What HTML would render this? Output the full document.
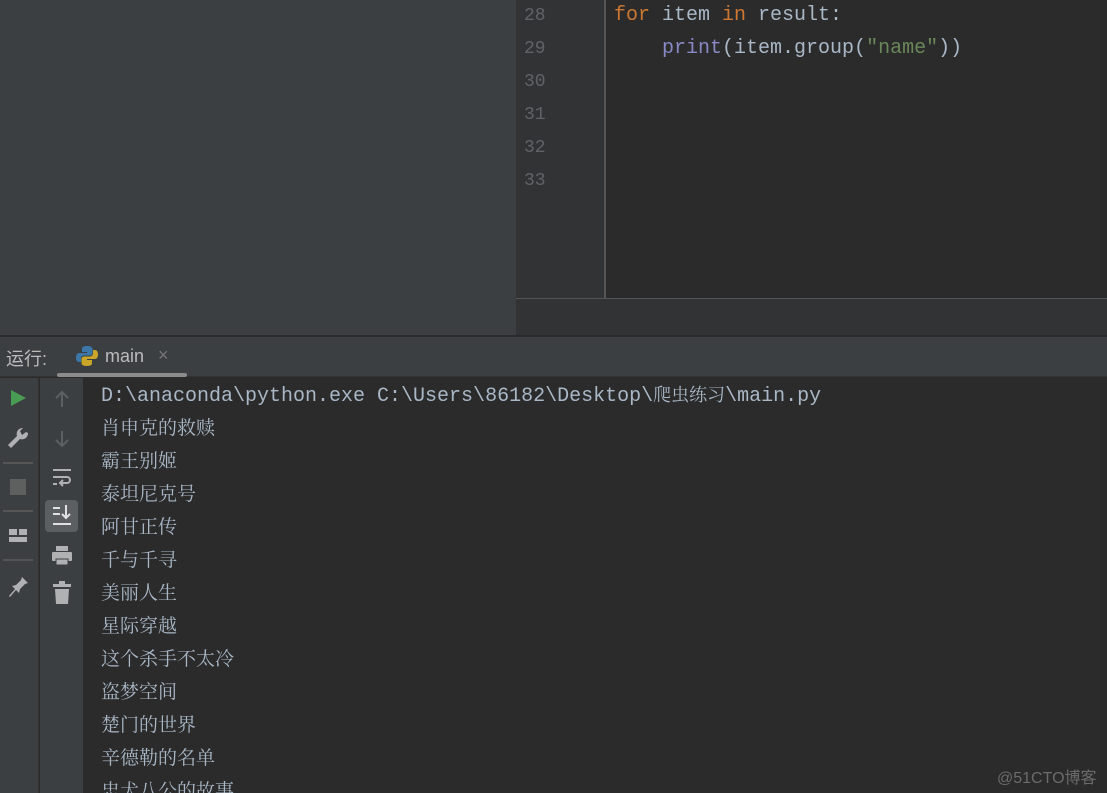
<!DOCTYPE html>
<html><head><meta charset="utf-8"><style>
*{margin:0;padding:0;box-sizing:border-box}
html,body{width:1107px;height:793px;overflow:hidden}
body{background:#2b2b2b;position:relative;font-family:"Liberation Sans","Noto Sans CJK SC",sans-serif}
.a{position:absolute}
.mono{font-family:"Liberation Mono","DejaVu Sans Mono","Noto Sans CJK SC",monospace}
.ln{position:absolute;left:524px;color:#606366;font-size:18px}
.cl{position:absolute;left:101px;color:#a9b7c6;font-size:19px;font-family:"Noto Serif CJK SC","Noto Sans CJK SC",serif;white-space:nowrap}
</style></head><body>
<div class="a" style="left:0;top:0;width:516px;height:336px;background:#3c3f41"></div>
<div class="a" style="left:516px;top:0;width:89px;height:299px;background:#313335"></div>
<div class="a" style="left:604px;top:0;width:2px;height:299px;background:#555"></div>
<div class="a" style="left:606px;top:0;width:501px;height:299px;background:#2b2b2b"></div>
<div class="a" style="left:516px;top:298px;width:591px;height:38px;background:#313335;border-top:1px solid #555"></div>
<div class="ln mono" style="top:6px">28</div>
<div class="ln mono" style="top:39px">29</div>
<div class="ln mono" style="top:72px">30</div>
<div class="ln mono" style="top:105px">31</div>
<div class="ln mono" style="top:138px">32</div>
<div class="ln mono" style="top:171px">33</div>
<div class="a mono" style="left:614px;top:4px;font-size:20px;color:#a9b7c6;white-space:pre"><span style="color:#cc7832">for</span> item <span style="color:#cc7832">in</span> result:</div>
<div class="a mono" style="left:614px;top:37px;font-size:20px;color:#a9b7c6;white-space:pre">    <span style="color:#8888c6">print</span>(item.group(<span style="color:#6a8759">"name"</span>))</div>
<div class="a" style="left:0;top:335px;width:1107px;height:2px;background:#2b2b2b"></div>
<div class="a" style="left:0;top:337px;width:1107px;height:40px;background:#3c3f41;border-bottom:1px solid #323232"></div>
<div class="a" style="left:6px;top:345px;font-size:18px;color:#bbbbbb">运行:</div>
<svg class="a" style="left:76px;top:345px" width="22" height="22" viewBox="0 0 22 22"><path d="M11 1c-5 0-5 2-5 3v3h5v1H3c-2 0-3 2-3 4.5S1 17 3 17h2v-3c0-2 1-3.5 3.5-3.5h5c2 0 3-1 3-3V4c0-2-2-3-5.5-3z" fill="#3b77a8"/><path d="M11 21c5 0 5-2 5-3v-3h-5v-1h8c2 0 3-2 3-4.5S21 5 19 5h-2v3c0 2-1 3.5-3.5 3.5h-5c-2 0-3 1-3 3V18c0 2 2 3 5.5 3z" fill="#c9a52a"/></svg>
<div class="a" style="left:105px;top:346px;font-size:18px;color:#bbbbbb">main</div>
<div class="a" style="left:158px;top:345px;font-size:18px;color:#777">×</div>
<div class="a" style="left:57px;top:373px;width:130px;height:4px;border-radius:2px;background:#8c8c8c"></div>
<div class="a" style="left:0;top:378px;width:39px;height:415px;background:#3c3f41;border-right:1px solid #323232"></div>
<div class="a" style="left:40px;top:378px;width:43px;height:415px;background:#3c3f41"></div>
<svg class="a" style="left:0;top:378px" width="83" height="240">
<path d="M11 12l15 8-15 8z" fill="#499c54"/>
<path d="M28 55a6 6 0 0 1-8 6l-9 9-3-3 9-9a6 6 0 0 1 6-8l-3 3 2 4 4-3z" fill="#afb1b3"/>
<line x1="3" y1="85" x2="33" y2="85" stroke="#555" stroke-width="2"/>
<rect x="10" y="101" width="16" height="16" fill="#5e6060"/>
<line x1="3" y1="133" x2="33" y2="133" stroke="#555" stroke-width="2"/>
<rect x="9" y="151" width="8" height="6" fill="#afb1b3"/><rect x="19" y="151" width="8" height="6" fill="#afb1b3"/><rect x="9" y="159" width="18" height="5" fill="#afb1b3"/>
<line x1="3" y1="182" x2="33" y2="182" stroke="#555" stroke-width="2"/>
<path d="M22 199l6 6-3 1-5 5-1 4-3-3-6 7-1-1 6-7-3-3 4-1 5-5z" fill="#afb1b3"/>
<path d="M62 29V14m-6 6l6-6 6 6" stroke="#5d6060" stroke-width="2" fill="none"/>
<path d="M62 53v15m-6-6l6 6 6-6" stroke="#5d6060" stroke-width="2" fill="none"/>
<path d="M53 92h18M53 99h14a3 3 0 0 1 0 6h-6m2-3l-3 3 3 3M53 106h4" stroke="#afb1b3" stroke-width="2" fill="none"/>
<rect x="45" y="122" width="33" height="32" rx="4" fill="#5c5f61"/>
<path d="M53 130h7M53 136h7M53 146h18M66 127v13m-4-4l4 4 4-4" stroke="#dfe1e5" stroke-width="2" fill="none"/>
<rect x="56" y="168" width="12" height="5" fill="#afb1b3"/><rect x="52" y="174" width="20" height="9" rx="1" fill="#afb1b3"/><rect x="56" y="181" width="12" height="6" fill="#afb1b3" stroke="#3c3f41" stroke-width="1"/>
<rect x="53" y="206" width="18" height="3" fill="#afb1b3"/><rect x="59" y="203" width="6" height="3" fill="#afb1b3"/><path d="M55 211h14l-1 15H56z" fill="#afb1b3"/>
</svg>
<div class="a mono" style="left:101px;top:381px;font-size:20px;color:#a9b7c6;white-space:nowrap">D:\anaconda\python.exe C:\Users\86182\Desktop\<span style="font-family:'Noto Serif CJK SC',serif;font-size:18px">爬虫练习</span>\main.py</div>
<div class="cl" style="top:413px">肖申克的救赎</div>
<div class="cl" style="top:446px">霸王别姬</div>
<div class="cl" style="top:479px">泰坦尼克号</div>
<div class="cl" style="top:512px">阿甘正传</div>
<div class="cl" style="top:545px">千与千寻</div>
<div class="cl" style="top:578px">美丽人生</div>
<div class="cl" style="top:611px">星际穿越</div>
<div class="cl" style="top:644px">这个杀手不太冷</div>
<div class="cl" style="top:677px">盗梦空间</div>
<div class="cl" style="top:710px">楚门的世界</div>
<div class="cl" style="top:743px">辛德勒的名单</div>
<div class="cl" style="top:776px">忠犬八公的故事</div>
<div class="a" style="left:997px;top:764px;font-size:16px;color:#6b6b6b">@51CTO博客</div>
</body></html>
